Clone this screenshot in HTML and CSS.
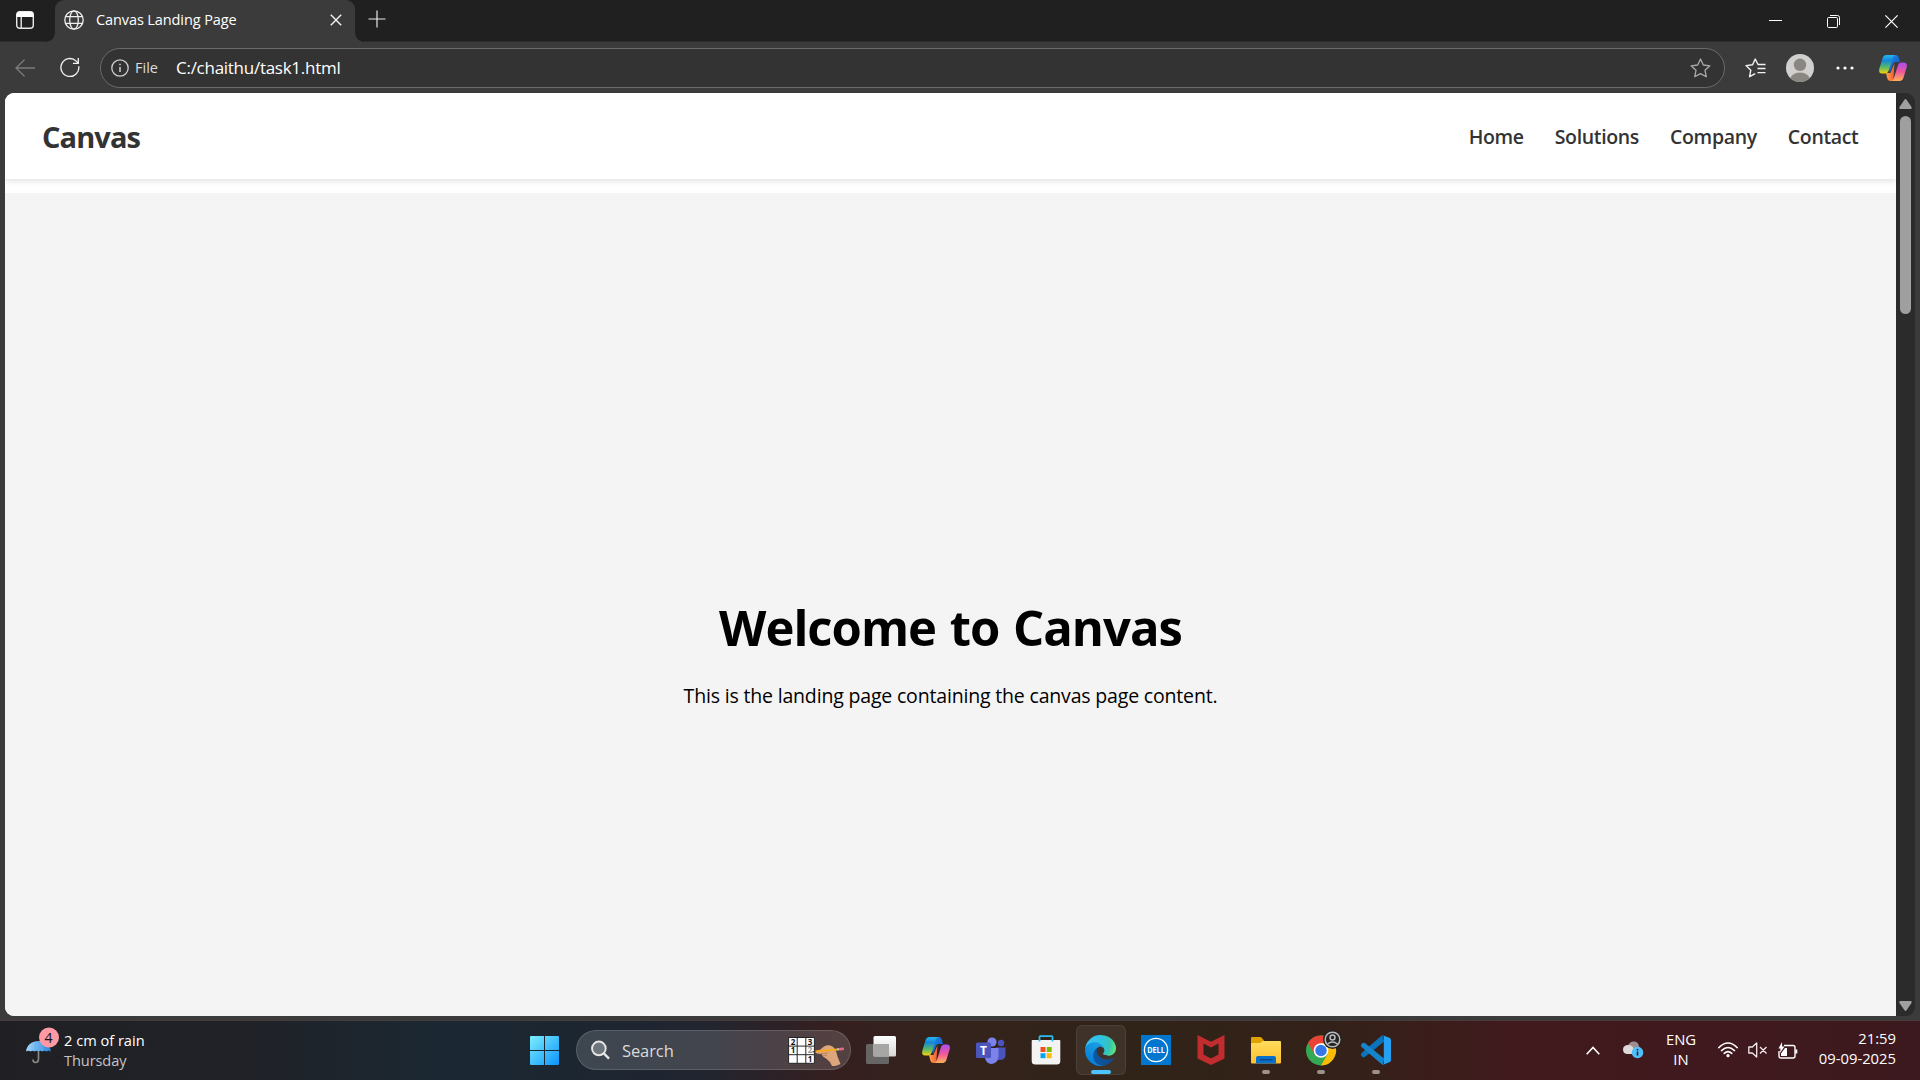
FILE: index.html
```html
<!DOCTYPE html>
<html lang="en">
<head>
<meta charset="utf-8">
<title>Canvas Landing Page</title>
<link rel="stylesheet" href="styles.css">
</head>
<body>
<svg class="defs" width="0" height="0" aria-hidden="true">
  <defs>
    <linearGradient id="cpA" x1="0" y1="0" x2="0" y2="1"><stop offset="0" stop-color="#24b7f0"/><stop offset=".3" stop-color="#1687d8"/><stop offset=".65" stop-color="#55b96a"/><stop offset="1" stop-color="#f5d30c"/></linearGradient>
    <linearGradient id="cpB" x1="0" y1="0" x2="0" y2="1"><stop offset="0" stop-color="#a94df2"/><stop offset=".5" stop-color="#ee5799"/><stop offset="1" stop-color="#ffb25c"/></linearGradient>
    <linearGradient id="cpC" x1="0" y1="0" x2="1" y2="1"><stop offset="0" stop-color="#1b9be5"/><stop offset="1" stop-color="#1440c4"/></linearGradient>
    <linearGradient id="cpD" x1="0" y1="0" x2="1" y2="0"><stop offset="0" stop-color="#ffa14a"/><stop offset="1" stop-color="#f0442c"/></linearGradient>
    <symbol id="copilot" viewBox="0 0 28 26">
      <path fill="url(#cpC)" d="M8 0h8.500c2 0 2.800 1.200 3.400 3l1.300 4h-4c-2 0-3 .8-3.600 2.800L11 18z"/>
      <path fill="url(#cpD)" d="M7 18h4.500l4-10-1 14c-.4 2.500 2 4 4 4h-7c-2 0-2.800-1-3.300-3z"/>
      <path fill="url(#cpA)" d="M7.500 0H17c-1.800 0-2.700 1.200-3.300 3l-4 12.500c-.7 2-1.700 3-3.700 3H3c-2.700 0-3.400-2.400-2.600-5L3.300 4C4 1.500 5.300 0 7.500 0z"/>
      <path fill="url(#cpB)" d="M20.500 26H11.700c1.800 0 2.600-1.200 3.200-3l4-12.500c.6-2 1.600-3 3.600-3H25c2.700 0 3.400 2.400 2.600 5L24.700 22c-.7 2.500-2 4-4.200 4z"/>
    </symbol>
  </defs>
</svg>

<div class="browser">
  <div class="titlebar">
    <div class="tab-actions">
      <svg width="18" height="18" viewBox="0 0 18 18" fill="none" stroke="#e8e8e8" stroke-width="1.400"><rect x=".7" y=".7" width="16.600" height="16.600" rx="3"/><path d="M5.200 5v12"/><path fill="#fff" stroke="none" d="M.7 6V3.500A2.800 2.800 0 0 1 3.500.7h11a2.800 2.800 0 0 1 2.800 2.800V6z"/></svg>
    </div>
    <div class="tab">
      <svg width="20" height="20" viewBox="0 0 20 20" fill="none" stroke="#eee" stroke-width="1.300"><circle cx="10" cy="10" r="9.200"/><ellipse cx="10" cy="10" rx="4.300" ry="9.200"/><path d="M1.500 6.700h17M1.500 13.300h17"/></svg>
      <span class="tab-title">Canvas Landing Page</span>
      <svg width="12" height="12" viewBox="0 0 12 12" stroke="#f2f2f2" stroke-width="1.400"><path d="M.8.800l10.400 10.400M11.200.800L.8 11.200"/></svg>
    </div>
    <svg class="newtab" width="18" height="18" viewBox="0 0 18 18" stroke="#e8e8e8" stroke-width="1.200"><path d="M9 .5v17M.5 9h17"/></svg>
    <div class="window-buttons">
      <span><svg width="13" height="13" viewBox="0 0 13 13"><path d="M0 5.500h13" stroke="#fff"/></svg></span>
      <span><svg width="13" height="13" viewBox="0 0 13 13" fill="none" stroke="#fff"><rect x=".5" y="2.500" width="10" height="10" rx="1.200"/><path d="M3 .5h7.500a2 2 0 0 1 2 2V10"/></svg></span>
      <span><svg width="13" height="13" viewBox="0 0 13 13" stroke="#fff" stroke-width="1.200"><path d="M.4.400l12.200 12.200M12.600.400L.4 12.600"/></svg></span>
    </div>
  </div>

  <div class="toolbar">
    <svg class="back" width="20" height="18" viewBox="0 0 20 18" fill="none" stroke="#7b7b7b" stroke-width="1.300"><path d="M20 9H1M9.500.700L1 9l8.500 8.300"/></svg>
    <svg class="reload" width="20" height="21" viewBox="0 0 21 21" fill="none" stroke="#f2f2f2" stroke-width="1.400"><path d="M19.700 9.200A9.400 9.400 0 1 1 17 3.800l2 1.900"/><path d="M19.200.500v5.600h-5.600"/></svg>
    <div class="address">
      <svg width="18" height="18" viewBox="0 0 18 18" fill="none" stroke="#d0d0d0" stroke-width="1.300"><circle cx="9" cy="9" r="8.200"/><path d="M9 8v5M9 4.800v1.500" stroke-width="1.500"/></svg>
      <span class="scheme">File</span>
      <span class="url">C:/chaithu/task1.html</span>
      <svg width="21" height="20" viewBox="0 0 21 20" fill="none" stroke="#aaa" stroke-width="1.300" stroke-linejoin="round"><path d="M10.500 1l2.800 6 6.600.8-4.900 4.500 1.300 6.500-5.800-3.200-5.800 3.200L6 12.300 1.100 7.800 7.700 7z"/></svg>
    </div>
    <svg class="favs" width="21" height="20" viewBox="0 0 21 20" fill="none" stroke="#f2f2f2" stroke-width="1.400" stroke-linejoin="round"><path d="M20.500 6.500H13L10.200 1 7.600 6.700 1 7.600l4.800 4.600-1.200 6.500 5.600-3M12.500 10.500h8M12.500 14.600h8"/></svg>
    <svg class="avatar" width="28" height="28" viewBox="0 0 28 28"><clipPath id="av"><circle cx="14" cy="14" r="14"/></clipPath><g clip-path="url(#av)"><path fill="#d2d0ce" d="M0 0h28v28H0z"/><circle cx="14" cy="10.800" r="6.200" fill="#8a8681"/><ellipse cx="14" cy="26.500" rx="10.200" ry="8" fill="#8a8681"/></g></svg>
    <svg class="more" width="18" height="4" viewBox="0 0 18 4" fill="#fff"><circle cx="2" cy="2" r="1.600"/><circle cx="9" cy="2" r="1.600"/><circle cx="16" cy="2" r="1.600"/></svg>
    <svg class="side-copilot" width="28" height="26"><use href="#copilot"/></svg>
  </div>

  <div class="viewport">
    <div class="page">
      <header class="site-header">
        <div class="logo">Canvas</div>
        <nav class="site-nav">
          <a>Home</a>
          <a>Solutions</a>
          <a>Company</a>
          <a>Contact</a>
        </nav>
      </header>
      <main class="hero">
        <h1>Welcome to Canvas</h1>
        <p>This is the landing page containing the canvas page content.</p>
      </main>
    </div>
    <div class="scrollbar">
      <svg width="13" height="10" viewBox="0 0 13 10" fill="#a0a0a0"><path d="M5.500.700q1-1.200 2 0l5 7.300q.7 2-1 2h-10q-1.700 0-1-2z"/></svg>
      <div class="thumb"></div>
      <svg width="13" height="10" viewBox="0 0 13 10" fill="#a0a0a0"><path d="M5.500 9.300q1 1.200 2 0l5-7.300q.7-2-1-2h-10q-1.700 0-1 2z"/></svg>
    </div>
  </div>
</div>

<div class="taskbar">
  <div class="weather">
    <svg width="34" height="38" viewBox="0 0 34 38">
      <defs><linearGradient id="um" x1="0" x2="1"><stop offset="0" stop-color="#a7d7fb"/><stop offset="1" stop-color="#2583dc"/></linearGradient></defs>
      <path d="M12.500 14v17.500q0 4-3.200 4-2.300 0-2.300-3" fill="none" stroke="#8b8782" stroke-width="1.700"/>
      <path fill="url(#um)" d="M0 24.500C1 17.500 6 14 12.500 14S24 17.500 25 24.500q-2.500-1.500-4.500 0-2-1.500-4 0-2-1.500-4 0-2-1.500-4 0-2-1.500-4 0-2-1.500-4.500 0z"/>
      <path d="M8.500 24q0-7 4-10 4 3 4 10" fill="none" stroke="#5db1ef" stroke-width=".8"/>
      <circle cx="23" cy="10.500" r="10" fill="#ff99a4"/>
      <text x="22.500" y="16" text-anchor="middle" class="badge">4</text>
    </svg>
    <div class="weather-text"><span>2 cm of rain</span><span class="day">Thursday</span></div>
  </div>

  <div class="apps">
    <div class="app"><svg width="29" height="29" viewBox="0 0 29 29"><defs><linearGradient id="win" x1="0" y1="0" x2="1" y2="1"><stop offset="0" stop-color="#7cefff"/><stop offset="1" stop-color="#0d92fb"/></linearGradient></defs><path fill="url(#win)" d="M1 0h13v14H0V1a1 1 0 0 1 1-1zM15 0h13a1 1 0 0 1 1 1v13H15zM0 15h14v14H1a1 1 0 0 1-1-1zM15 15h14v13a1 1 0 0 1-1 1H15z"/></svg></div>
    <div class="search">
      <svg width="19" height="20" viewBox="0 0 20 20" fill="#6f757c" stroke="#e6e6e6" stroke-width="2"><circle cx="8.300" cy="8.300" r="7.200"/><path d="M13.500 13.500l5.500 5.500" stroke-width="2.500"/></svg>
      <span class="search-label">Search</span>
      <svg class="sudoku" width="57" height="32" viewBox="0 0 57 32">
        <path fill="#fff" stroke="#252525" stroke-width="1" d="M.6 3.500h25.800v25.800H.6zM9.200 3.500v25.800M17.800 3.500v25.800M.6 12.100h25.800M.6 20.700h25.800"/>
        <g class="digits" text-anchor="middle"><text x="5" y="10.600">2</text><text x="22" y="10.600">3</text><text x="5" y="19.200">1</text><text x="22" y="19.200" fill="#999">2</text><text x="22" y="27.800">1</text></g>
        <path fill="#dca57c" d="M26 18c2-1.500 5-1 7-3 2.500-2.700 6-4.500 9-3.500 5 1 6.500 6.500 7.500 11l3 7.500q-4 2.500-8.500 2-2-5-6-7.500-3-1-4.500-4.500-4 .3-7.500-2z"/>
        <path stroke="#bd8358" fill="none" d="M33 19.500q4 1 7-1M34 21.500q3 .8 5-.5"/>
        <path stroke="#f6a821" stroke-width="2.200" d="M27 17.500l22-2"/><path stroke="#ccc" stroke-width="2.200" d="M49 15.500l2.500-.3"/><path stroke="#e76a7b" stroke-width="2.600" stroke-linecap="round" d="M52.500 15.100l2.300-.2"/><path fill="#4b3522" d="M23.500 17.900l4-1.600.2 2.500z"/>
      </svg>
    </div>
    <div class="app"><svg width="30" height="28" viewBox="0 0 30 28"><defs><linearGradient id="tv" x1="0" y1="0" x2="0" y2="1"><stop offset="0" stop-color="#fff"/><stop offset="1" stop-color="#d6d6d6"/></linearGradient></defs><rect x="0" y="8" width="23" height="20" rx="1.500" fill="#676563"/><rect x="7.500" y="0" width="22.500" height="20.500" rx="1.500" fill="url(#tv)"/><path fill="#a8a6a5" d="M7.500 8H23v12.500H7.500z"/></svg></div>
    <div class="app"><svg width="28" height="26"><use href="#copilot"/></svg></div>
    <div class="app"><svg width="30" height="27" viewBox="0 0 30 27"><circle cx="25" cy="6" r="3.200" fill="#4b53bc"/><path fill="#4b53bc" d="M20 10.500h9.500v7q0 5-5 5.500H20z"/><circle cx="16" cy="5" r="4.600" fill="#7b83eb"/><path fill="#7b83eb" d="M9 11h13.500v8.500q-.8 7-7 7.500-5.500-.5-6.500-6z"/><rect x="0" y="5.500" width="15" height="15.500" rx="1.500" fill="#4d55bd"/><text x="7.500" y="17.500" text-anchor="middle" class="teams">T</text></svg></div>
    <div class="app"><svg width="30" height="30" viewBox="0 0 30 30"><path d="M8.500 7V2q0-.8.800-.8h11.400q.8 0 .8.800v5" fill="none" stroke="#29bdf0" stroke-width="1.800"/><path fill="#f3f3f3" d="M1.500 5h27a.8.800 0 0 1 .8.800V26q0 3.500-3.500 3.500H4.200Q.7 29.500.7 26V5.800A.8.800 0 0 1 1.500 5z"/><path d="M8.500 5v1.500M21.500 5v1.500" stroke="#29bdf0" stroke-width="1.800"/><path fill="#f25022" d="M9.500 12h5v5h-5z"/><path fill="#7fba00" d="M15.700 12h5v5h-5z"/><path fill="#00a4ef" d="M9.500 18.200h5v5h-5z"/><path fill="#ffb900" d="M15.700 18.200h5v5h-5z"/></svg></div>
    <div class="app active"><svg width="31" height="31" viewBox="0 0 256 256"><defs>
      <linearGradient id="e1" x1="60" y1="177" x2="240" y2="177" gradientUnits="userSpaceOnUse"><stop offset="0" stop-color="#0c59a4"/><stop offset="1" stop-color="#114a8b"/></linearGradient>
      <linearGradient id="e2" x1="152" y1="90" x2="40" y2="220" gradientUnits="userSpaceOnUse"><stop offset="0" stop-color="#1b9de2"/><stop offset=".4" stop-color="#1595df"/><stop offset="1" stop-color="#0680d7"/></linearGradient>
      <radialGradient id="e3" cx="26" cy="66" r="240" gradientUnits="userSpaceOnUse"><stop offset="0" stop-color="#35c1f1"/><stop offset=".25" stop-color="#34c1ed"/><stop offset=".5" stop-color="#2fc2df"/><stop offset=".75" stop-color="#36c5b5"/><stop offset="1" stop-color="#66eb6e"/></radialGradient></defs>
      <path fill="url(#e1)" d="M231 190.500a93.700 93.700 0 0 1-10.500 4.700 101.900 101.900 0 0 1-35.900 6.500c-47.300 0-88.500-32.500-88.500-74.300a31.500 31.500 0 0 1 16.400-27.300c-42.800 1.800-53.800 46.400-53.800 72.500 0 73.900 68.100 81.400 82.800 81.400 7.900 0 19.800-2.300 27-4.600l1.300-.4a128.300 128.300 0 0 0 66.600-52.800 4 4 0 0 0-5.400-5.700z"/>
      <path fill="url(#e2)" d="M105.700 241.400a79.200 79.200 0 0 1-22.700-21.300A80.700 80.700 0 0 1 112.500 100c3.100-1.500 8.500-4.100 15.600-4a32.400 32.400 0 0 1 25.700 13 31.900 31.900 0 0 1 6.300 18.700c0-.2 24.500-79.600-80-79.600-43.900 0-80 41.600-80 78.200a130.200 130.200 0 0 0 12.100 56 128 128 0 0 0 156.400 67 75.500 75.500 0 0 1-62.900-8z"/>
      <path fill="url(#e3)" d="M152.300 148.900c-.9 1-3.400 2.500-3.400 5.600 0 2.600 1.700 5.200 4.800 7.300 14.300 10 41.400 8.600 41.500 8.600a59.600 59.600 0 0 0 30.300-8.300 61.400 61.400 0 0 0 30.400-52.900c.3-22.400-8-37.300-11.300-43.900C223.500 23.900 177.700 0 128 0A128 128 0 0 0 0 126.200c.5-36.500 36.800-66 80-66 3.500 0 23.500.3 42 10a72.600 72.600 0 0 1 30.900 29.300c6.100 10.600 7.200 24.100 7.200 29.500s-2.700 13.300-7.800 19.900z"/></svg></div>
    <div class="app"><svg width="30" height="30" viewBox="0 0 30 30"><path fill="#0076ce" d="M0 0h30v30H0z"/><circle cx="15" cy="15" r="11.600" fill="none" stroke="#fff" stroke-width="1.300"/><text x="15" y="18" text-anchor="middle" class="dell" textLength="17.500" lengthAdjust="spacingAndGlyphs">DELL</text></svg></div>
    <div class="app"><svg width="28" height="30" viewBox="0 0 28 30"><path fill="#c12c2e" d="M.5 0L14 6.700 27.500 0v23.500L14 30 .5 23.500zM6.500 8.500v11L14 23.500l7.500-4v-11L14 12.500z" fill-rule="evenodd"/></svg></div>
    <div class="app running"><svg width="30" height="27" viewBox="0 0 30 27"><defs><linearGradient id="fo" x1="0" y1="0" x2="0" y2="1"><stop offset="0" stop-color="#ffdc5c"/><stop offset="1" stop-color="#ffc02e"/></linearGradient></defs><path fill="#dfa200" d="M0 1.200Q0 0 1.200 0H9q1 0 1.700.8L13 3.500v5H0z"/><path fill="url(#fo)" d="M1 6h8l3-2h17q1 0 1 1v20.500q0 1-1 1H1q-1 0-1-1V7q0-1 1-1z"/><path fill="#0a6fc8" d="M5 26.500V21q0-2 2-2h16q2 0 2 2v5.500z"/><path d="M9 22.800h12.500" stroke="#073f86" stroke-width="1.200"/></svg></div>
    <div class="app running chrome"><svg width="36" height="36" viewBox="0 0 36 36"><circle cx="15" cy="20.500" r="15" fill="#34a853"/><path fill="#ea4335" d="M2 13A15 15 0 0 1 28 13H15L8.500 24.200z"/><path fill="#fbbc05" d="M15 13h13a15 15 0 0 1-13 22.500L21.500 24.200z"/><circle cx="15" cy="20.500" r="7.300" fill="#fff"/><circle cx="15" cy="20.500" r="5.700" fill="#3576e8"/><circle cx="26.500" cy="9.500" r="9.500" fill="#242424"/><g fill="none" stroke="#bbb" stroke-width="1.500"><circle cx="26.500" cy="9.500" r="7.300"/><circle cx="26.500" cy="7.500" r="2.500"/><path d="M21.500 14q5-4 10 0"/></g></svg></div>
    <div class="app running"><svg width="30" height="30" viewBox="0 0 100 100"><path fill="#0a73bb" d="M1 61L71 0l6 22L13 73q-4 3-8 0l-4-4q-3-4 0-8z"/><path fill="#1683cd" d="M1 39q-3-4 0-8l4-4q4-3 8 0l64 51-5 22z"/><path fill="#26a0f2" d="M71 0l25 10q4 2 4 6v68q0 4-4 6L72 100q4-2 4-7V7q0-5-5-7z"/></svg></div>
  </div>

  <div class="tray">
    <svg class="chev" width="14" height="9" viewBox="0 0 14 9" fill="none" stroke="#fff" stroke-width="1.600"><path d="M.7 8.200L7 1.500l6.300 6.700"/></svg>
    <svg class="cloud" width="21" height="18" viewBox="0 0 21 18"><path fill="#9e8e91" d="M5 5q1.500-5 6.500-4.500 4 .5 4.500 5Q19 7 18 12H8z"/><path fill="#ded9da" d="M4.500 4q4-.5 6 3 4 0 4 6H4Q0 12.500 0 8.500 0 4.500 4.500 4z"/><circle cx="14.500" cy="11.500" r="5.800" fill="#50bef8"/><path d="M14.500 10.500v4M14.500 8v1.400" stroke="#132430" stroke-width="1.500"/></svg>
    <div class="lang"><span>ENG</span><span>IN</span></div>
    <svg class="wifi" width="20" height="16" viewBox="0 0 20 16" fill="none" stroke="#fff" stroke-width="1.500" stroke-linecap="round"><path d="M.8 5.600Q10-3.600 19.200 5.600M3.500 8.600q6.500-6.300 13 0M6.200 11.400q3.800-3.600 7.600 0"/><circle cx="10" cy="13.700" r="1.600" fill="#fff" stroke="none"/></svg>
    <svg class="sound" width="20" height="16" viewBox="0 0 20 16" fill="none" stroke="#f5eaec" stroke-width="1.300" stroke-linejoin="round"><path d="M.8 5h3.500L8.700 1v14l-4.400-4H.8zM12 5l6.500 6.500M18.500 5L12 11.500"/></svg>
    <svg class="battery" width="20" height="17" viewBox="0 0 20 17"><path d="M6 3.500h9q2 0 2 2V14q0 2-2 2H3q-2 0-2-2V9" fill="none" stroke="#fff" stroke-width="1.400"/><path d="M18.300 7.500v4" stroke="#fff" stroke-width="2"/><path fill="#fff" d="M4 0L.5 6.500h2L2 11l4.500-6.500H4.200zM3 14v-2.500L7 6h2v8z"/></svg>
    <div class="clock"><span>21:59</span><span>09-09-2025</span></div>
  </div>
</div>
</body>
</html>
```
FILE: styles.css
```css
* { box-sizing: border-box; }
body { margin: 0; width: 1920px; height: 1080px; overflow: hidden; display: flex; flex-direction: column; background: #3b3b3b; font-family: "Open Sans", "Noto Sans", sans-serif; color: #fff; white-space: nowrap; }
svg { display: block; flex: none; }
.defs { position: absolute; }

.browser { height: 1020px; flex: none; display: flex; flex-direction: column; background: #3b3b3b; }
.titlebar { height: 42px; flex: none; display: flex; background: #202020; border-bottom: 1px solid #2c2c2c; }
.tab-actions { width: 55px; padding: 11px 0 0 16px; }
.tab { width: 300px; height: 42px; display: flex; align-items: center; padding: 0 13px 2px 9px; background: #3b3b3b; border-radius: 9px 9px 0 0; }
.tab::before, .tab::after { content: ""; position: absolute; top: 33px; width: 9px; height: 9px; }
.tab::before { left: 46px; background: radial-gradient(circle at 0 0, #202020 8.500px, #3b3b3b 9px); }
.tab::after { left: 355px; background: radial-gradient(circle at 100% 0, #202020 8.500px, #3b3b3b 9px); }
.tab-title { flex: 1; padding-left: 12px; font-size: 14.500px; line-height: 20px; letter-spacing: -.1px; }
.newtab { margin: 10px 0 0 13px; }
.window-buttons { margin-left: auto; display: flex; padding-top: 15px; }
.window-buttons span { width: 58px; display: flex; justify-content: center; }

.toolbar { height: 51px; flex: none; display: flex; align-items: center; padding: 0 13px 0 15px; }
.reload { margin-left: 25px; }
.address { width: 1625px; height: 40px; margin-left: 20px; padding: 0 13px 0 10px; display: flex; align-items: center; border: 1px solid #6b6b6b; border-radius: 20px; background: #333; }
.scheme { width: 47px; padding-left: 6px; font-size: 14.500px; color: #dcdcdc; font-weight: 500; }
.url { flex: 1; font-size: 17px; letter-spacing: -.27px; }
.favs { margin-left: 20px; }
.avatar { margin-left: 20px; }
.more { margin-left: 22px; }
.side-copilot { margin-left: auto; }

.viewport { height: 923px; flex: none; margin: 0 5px; display: flex; border-radius: 9px; overflow: hidden; background: #2b2b2b; }
.page { width: 1891px; display: flex; flex-direction: column; background: #fff; }
.site-header { height: 86px; flex: none; display: flex; justify-content: space-between; align-items: center; padding: 0 37.500px 0 37px; background: #fff; box-shadow: 0 2px 6px rgba(0,0,0,.12); color: #333; }
.logo { font-size: 29px; font-weight: 700; letter-spacing: -.9px; }
.site-nav { display: flex; gap: 31px; font-size: 19.500px; font-weight: 600; letter-spacing: -.34px; }
.hero { flex: 1; margin-top: 14px; padding-top: 400px; background: #f4f4f4; color: #000; text-align: center; }
h1 { margin: 0; font-size: 49px; line-height: 68px; font-weight: 700; letter-spacing: -1px; word-spacing: 2px; }
p { margin: 21px 0 0; font-size: 19.500px; line-height: 28px; letter-spacing: -.175px; }
.scrollbar { flex: 1; display: flex; flex-direction: column; padding: 6px 0 5px 3px; }
.thumb { width: 11px; height: 198px; margin: 7px 0 auto 1px; border-radius: 6px; background: #9f9f9f; }

.taskbar { height: 60px; flex: none; display: flex; padding-bottom: 1px; border-top: 1px solid #453b3b; background: linear-gradient(90deg, #202024 0, #202227 240px, #1b2833 450px, #1c2631 570px, #212530 700px, #351f20 830px, #34231c 950px, #302318 1150px, #342119 1350px, #401a1d 1500px, #40191e 1700px, #3c191e 1920px); }
.weather { width: 517px; display: flex; padding: 6px 0 0 25.500px; font-size: 14.600px; line-height: 20px; }
.weather-text { display: flex; flex-direction: column; align-items: flex-start; padding: 3px 0 0 4.500px; }
.day { color: #c4c4c6; letter-spacing: -.1px; }
.badge { font-size: 14px; fill: #111; }
.apps { display: flex; align-items: center; }
.app { position: relative; width: 55px; height: 50px; display: flex; align-items: center; justify-content: center; }
.active::before { content: ""; position: absolute; inset: 0 2.500px; border: 1px solid rgba(255,255,255,.07); border-radius: 6px; background: rgba(255,255,255,.07); }
.active svg { position: relative; }
.active::after, .running::after { content: ""; position: absolute; left: 24px; bottom: 1px; width: 8px; height: 4px; border-radius: 2px; background: #9b918d; }
.active::after { left: 18px; width: 20px; background: #4cc2ff; }
.chrome svg { margin: -5px 0 0 7px; }
.search { width: 275px; height: 40px; margin: 0 2px 0 4px; padding: 0 5px 0 14px; display: flex; align-items: center; border: 1px solid rgba(255,255,255,.14); border-radius: 20px; background: rgba(255,255,255,.15); }
.search-label { flex: 1; padding-left: 12px; font-size: 16.500px; letter-spacing: -.1px; color: #dadada; }
.digits { font-size: 8px; font-weight: 700; fill: #111; }
.teams { font-size: 12px; font-weight: 700; fill: #fff; }
.dell { font-size: 8px; font-weight: 700; fill: #fff; }
.tray { flex: 1; display: flex; align-items: center; padding-right: 24px; font-size: 14.800px; line-height: 19.500px; }
.chev { margin-left: auto; }
.cloud { margin-left: 23px; }
.lang { width: 74px; display: flex; flex-direction: column; align-items: center; padding-bottom: 1px; }
.sound { margin-left: 10px; }
.battery { margin-left: 10px; }
.clock { width: 98px; display: flex; flex-direction: column; align-items: flex-end; padding-bottom: 3px; }
```
